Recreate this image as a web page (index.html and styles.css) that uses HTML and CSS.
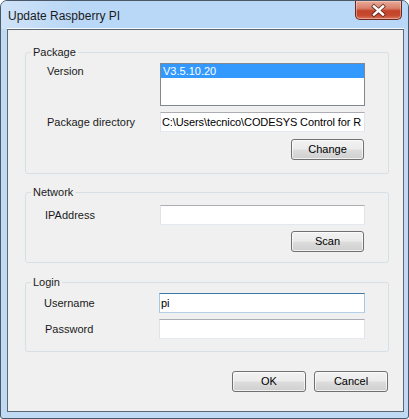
FILE: index.html
```html
<!DOCTYPE html>
<html>
<head>
<meta charset="utf-8">
<title>Update Raspberry PI</title>
<link rel="stylesheet" href="styles.css">
</head>
<body>
<div class="window">
  <div class="titlebar">
    <span class="title">Update Raspberry PI</span>
    <div class="close">
      <svg width="45" height="17" viewBox="0 0 45 17">
        <path d="M18 4.5 L27 12.5 M27 4.5 L18 12.5" stroke="#4a2018" stroke-width="4.2" stroke-linecap="square" fill="none" opacity="0.75"/>
        <path d="M18 4.5 L27 12.5 M27 4.5 L18 12.5" stroke="#ffffff" stroke-width="2.4" stroke-linecap="square" fill="none"/>
      </svg>
    </div>
  </div>
  <div class="client">
    <div class="group group-package">
      <div class="legend">Package</div>
      <div class="row row-top">
        <span class="label label-version">Version</span>
        <div class="listbox"><div class="item selected">V3.5.10.20</div></div>
      </div>
      <div class="row row-dir">
        <span class="label">Package directory</span>
        <div class="textbox textbox-path">C:\Users\tecnico\CODESYS Control for R</div>
      </div>
      <div class="actions actions-package"><button class="btn btn-group">Change</button></div>
    </div>

    <div class="group group-network">
      <div class="legend">Network</div>
      <div class="row row-ip">
        <span class="label label-tight">IPAddress</span>
        <div class="textbox"></div>
      </div>
      <div class="actions actions-network"><button class="btn btn-group">Scan</button></div>
    </div>

    <div class="group group-login">
      <div class="legend">Login</div>
      <div class="row row-user">
        <span class="label label-tighter">Username</span>
        <div class="textbox textbox-login focused">pi</div>
      </div>
      <div class="row row-pass">
        <span class="label label-tight">Password</span>
        <div class="textbox textbox-login"></div>
      </div>
    </div>

    <div class="dialog-buttons">
      <button class="btn btn-dialog">OK</button>
      <button class="btn btn-dialog">Cancel</button>
    </div>
  </div>
</div>
</body>
</html>
```
FILE: styles.css
```css
* { box-sizing: border-box; }

html, body {
  margin: 0;
  padding: 0;
  background: #ffffff;
}

body {
  font-family: "Liberation Sans", Arial, sans-serif;
  font-size: 11px;
  color: #000000;
}

.window {
  width: 409px;
  height: 419px;
  border: 1px solid #4a5868;
  border-radius: 7px 7px 3px 3px;
  background: #c0daf4;
  padding: 0 4px 6px 6px;
  display: flex;
  flex-direction: column;
  overflow: hidden;
}

.titlebar {
  height: 28px;
  flex: none;
  display: flex;
  justify-content: space-between;
  align-items: center;
  margin-left: -6px;
  margin-right: -4px;
  padding-left: 7px;
  padding-right: 6px;
  background: linear-gradient(90deg, #cfe3f8 0%, #b9d7f6 18%, #b9d7f6 100%);
}

.title {
  font-family: "Liberation Sans", Arial, sans-serif;
  font-size: 12px;
  line-height: 16px;
  color: #1b1b1b;
  padding-top: 1px;
}

.close {
  align-self: flex-start;
  width: 47px;
  height: 19px;
  border: 1px solid #6a2a20;
  border-top: none;
  border-radius: 0 0 5px 5px;
  background: linear-gradient(#e9ab9b 0%, #d9806a 40%, #c4432b 55%, #c64a2f 80%, #d8775b 100%);
  box-shadow: inset 0 0 0 1px rgba(255, 220, 210, 0.45);
  display: flex;
  align-items: center;
  justify-content: center;
}

.close svg { display: block; }

.client {
  flex: 1;
  background: #f0f0f0;
  border: 1px solid #5b6773;
  box-shadow: 0 -1px 0 rgba(255, 255, 255, 0.85);
  padding: 0 14px 0 17px;
  display: flex;
  flex-direction: column;
}

.group {
  border: 1px solid #d5dfe5;
  border-radius: 3px;
  padding: 0 23px 0 21px;
  display: flex;
  flex-direction: column;
}

.group-package { margin-top: 22px; padding-bottom: 13px; }
.group-network { margin-top: 18px; padding-bottom: 10px; }
.group-login { margin-top: 19px; padding-bottom: 12px; }

.legend {
  align-self: flex-start;
  margin: -7px 0 0 -16px;
  padding: 0 2px;
  line-height: 13px;
  background: #f0f0f0;
  color: #1a1a1a;
}

.row {
  display: grid;
  grid-template-columns: 113px 205px;
  align-items: center;
}

.row-top { margin-top: 4px; align-items: start; }
.row-dir { margin-top: 6px; }
.row-ip { margin-top: 6px; }
.row-user { margin-top: 4px; }
.row-pass { margin-top: 6px; }

.label {
  line-height: 13px;
  color: #1a1a1a;
  white-space: nowrap;
}

.label-version { padding-top: 2px; }
.label-tight { margin-left: -2px; }
.label-tighter { margin-left: -3px; }

.listbox {
  height: 43px;
  background: #ffffff;
  border: 1px solid #828790;
}

.item {
  height: 14px;
  line-height: 14px;
  padding-left: 2px;
}

.item.selected {
  background: #3399ff;
  color: #ffffff;
}

.textbox {
  height: 20px;
  background: #ffffff;
  border: 1px solid #e2e3ea;
  border-top-color: #abadb3;
  border-bottom-color: #e3e9ef;
  padding: 0 1px;
  line-height: 18px;
  white-space: nowrap;
  overflow: hidden;
}

.textbox-path { letter-spacing: -0.1px; }

.textbox-login { margin-left: -1px; width: 206px; }

.textbox.focused {
  border-color: #a4c9e3;
  border-top-color: #3d7bad;
  border-bottom-color: #b5cfe7;
}

.actions {
  display: flex;
  justify-content: flex-end;
  padding-right: 1px;
}

.actions-package { margin-top: 7px; }
.actions-network { margin-top: 6px; }

.btn {
  font-family: "Liberation Sans", Arial, sans-serif;
  font-size: 11px;
  color: #000000;
  height: 21px;
  width: 73px;
  padding: 0;
  border: 1px solid #707070;
  border-radius: 3px;
  background: linear-gradient(#f2f2f2 0%, #ebebeb 48%, #dddddd 52%, #cfcfcf 100%);
  box-shadow: inset 0 0 0 1px rgba(255, 255, 255, 0.7);
  line-height: 17px;
}

.dialog-buttons {
  margin-top: 19px;
  display: flex;
  justify-content: flex-end;
  gap: 8px;
  padding-right: 1px;
}

.btn-dialog { width: 74px; }
```
